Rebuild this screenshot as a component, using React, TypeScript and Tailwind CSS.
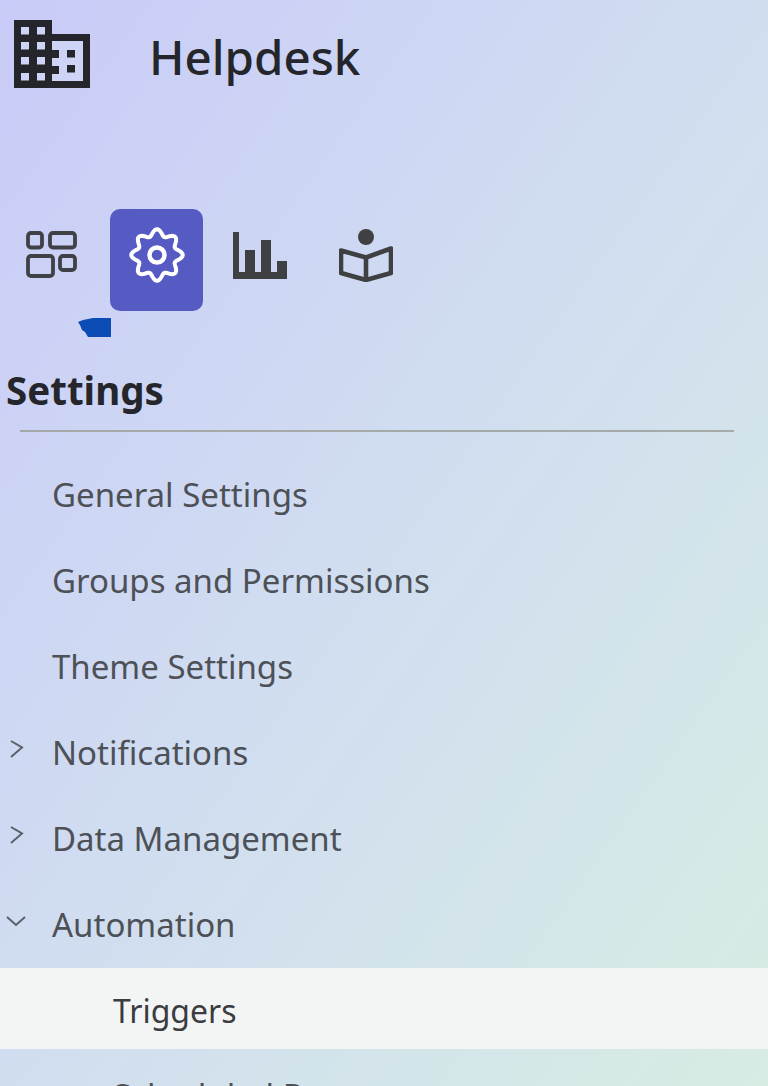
import React from "react";

function gearPath(cx: number, cy: number) {
  const pts: string[] = [];
  for (let i = 0; i <= 160; i++) {
    const a = (i / 160) * Math.PI * 2;
    const r = 22.5 + 3.2 * Math.cos(8 * a);
    pts.push(`${(cx + r * Math.sin(a)).toFixed(2)} ${(cy - r * Math.cos(a)).toFixed(2)}`);
  }
  return "M" + pts.join("L") + "Z";
}

const Building = () => (
  <svg width="76" height="68" viewBox="14 20 76 68" fill="none" className="shrink-0">
    <path fill="#24262b" d="M14 20H52V34H90V88H14Z" />
    <path fill="#cdd4f5" d="M52 41H83V81H52V74H59V66H52V58H59V50H52Z" />
    <g fill="#cdd4f5">
      {[27, 42, 57, 73].map((y) =>
        [21, 37].map((x) => <rect key={`${x}-${y}`} x={x} y={y} width="8" height="7.5" />)
      )}
    </g>
    <g fill="#24262b">
      <rect x="67" y="50" width="8" height="7.5" />
      <rect x="67" y="65" width="8" height="7.5" />
    </g>
  </svg>
);

const GridIcon = () => (
  <svg width="52" height="48" viewBox="27 231 52 48" fill="none" stroke="#3f4146" strokeWidth="3.8">
    <rect x="29" y="233" width="14" height="14.5" rx="3" />
    <rect x="51" y="233" width="25" height="14.5" rx="3" />
    <rect x="29" y="256" width="25" height="20" rx="3" />
    <rect x="61" y="256" width="15" height="14" rx="3" />
  </svg>
);

const GearIcon = () => (
  <svg width="60" height="60" viewBox="126 225 60 60" fill="none" stroke="#ffffff">
    <path d={gearPath(156, 255)} strokeWidth="4" />
    <circle cx="156" cy="255" r="7.5" strokeWidth="4.5" />
  </svg>
);

const ChartIcon = () => (
  <svg width="54" height="47" viewBox="233 232 54 47" fill="#3f4042">
    <path d="M233 232H239V272H245V250H255V272H261V240H271V272H277V261H287V279H233Z" />
  </svg>
);

const BookIcon = () => (
  <svg width="54" height="54" viewBox="339 228 54 54" fill="none">
    <circle cx="366" cy="237" r="8" fill="#3f4042" />
    <path
      d="M341 250.5L366 257.5L391 248.5V273L366 280L341 273ZM366 257.5V280"
      stroke="#3f4042"
      strokeWidth="4.6"
      strokeLinejoin="round"
    />
  </svg>
);

const Chevron = ({ open }: { open?: boolean }) => (
  <svg width="20" height="20" viewBox="0 0 20 20" fill="none" stroke="#5b6068" strokeWidth="2" className="shrink-0">
    <path d={open ? "M1 5L10 13L19 5" : "M5 1L16 7.5L5 17"} />
  </svg>
);

const Row = ({ label, state }: { label: string; state?: "closed" | "open" }) => (
  <div className="flex h-[86px] items-center">
    <div className="flex w-[52px] justify-start pl-[6px] pb-[6px]">
      {state && <Chevron open={state === "open"} />}
    </div>
    <span className="text-[33px] leading-none text-[#4d5157]">{label}</span>
  </div>
);

export default function App() {
  return (
    <div
      className="h-[1086px] w-[768px] overflow-hidden bg-gradient-to-br from-[#c9cbf8] via-[#d0dcf1] via-45% to-[#d7ece3]"
      style={{ fontFamily: '"Noto Sans", sans-serif' }}
    >
      <header className="flex h-[108px] items-start pt-[20px] pl-[14px]">
        <Building />
        <h1 className="ml-[59px] mt-[7px] text-[47.5px] leading-[60px] font-medium text-[#24262b]">Helpdesk</h1>
      </header>

      <nav className="relative mt-[101px] flex h-[102px] items-start pl-[26px]">
        <span className="mt-[22px] flex">
          <GridIcon />
        </span>
        <button className="ml-[32px] flex h-[102px] w-[93px] items-start justify-center rounded-[10px] bg-[#565bc4] pt-[16px]">
          <GearIcon />
        </button>
        <span className="ml-[30px] mt-[23px] flex"><ChartIcon /></span>
        <span className="ml-[52px] mt-[19px] flex"><BookIcon /></span>
        <svg width="34" height="20" viewBox="0 0 34 20" className="absolute left-[78px] top-[108px]" fill="#0b4db4">
          <path d="M0 5L5 3L15 1L33 1V20L10 20L7 15L4 13L2 8Z" />
        </svg>
      </nav>

      <h2 className="mt-[56px] pl-[6px] text-[38.5px] leading-[46px] font-bold text-[#24262b]">Settings</h2>
      <div className="mx-[20px] mt-[17px] mr-[34px] h-[1.5px] bg-[#a5aaa9]" />

      <div className="mt-[20px]">
        <Row label="General Settings" />
        <Row label="Groups and Permissions" />
        <Row label="Theme Settings" />
        <Row label="Notifications" state="closed" />
        <Row label="Data Management" state="closed" />
        <Row label="Automation" state="open" />
        <div className="flex h-[81px] items-center bg-[#f3f5f5] pl-[113px] pt-[5px]">
          <span className="text-[32px] leading-none text-[#3a3c40]">Triggers</span>
        </div>
        <div className="pl-[113px] pt-[30px]">
          <span className="text-[33px] leading-none text-[#4d5157]">Scheduled R</span>
        </div>
      </div>
    </div>
  );
}
